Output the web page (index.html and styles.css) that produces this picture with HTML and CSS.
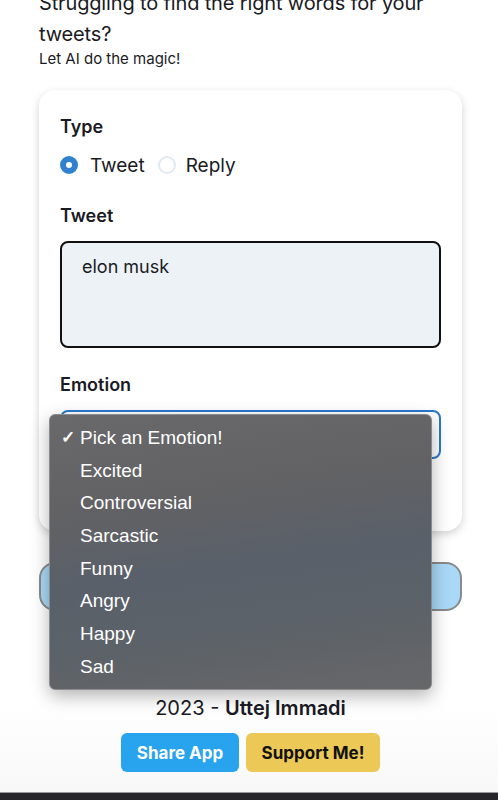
FILE: index.html
```html
<!DOCTYPE html>
<html lang="en">
<head>
    <meta charset="UTF-8">
    <meta name="viewport" content="width=device-width, initial-scale=1.0">
    <title>Tweet Generator</title>
    <link rel="stylesheet" href="styles.css">
</head>
<body>
    <div class="main">
        <h1 class="title">Struggling to find the right words for your tweets?</h1>
        <p class="sub">Let AI do the magic!</p>

        <div class="card">
            <div class="label">Type</div>
            <div class="radios">
                <span class="radio checked"></span>
                <span class="radio-text">Tweet</span>
                <span class="radio"></span>
                <span class="radio-text">Reply</span>
            </div>

            <div class="label">Tweet</div>
            <div class="textarea">elon musk</div>

            <div class="label">Emotion</div>
            <div class="select">
                <!-- native popup, open -->
                <div class="dropdown">
                    <div class="option"><span class="check">✓</span>Pick an Emotion!</div>
                    <div class="option">Excited</div>
                    <div class="option">Controversial</div>
                    <div class="option">Sarcastic</div>
                    <div class="option">Funny</div>
                    <div class="option">Angry</div>
                    <div class="option">Happy</div>
                    <div class="option">Sad</div>
                </div>
            </div>
        </div>

        <button class="generate">Generate</button>

        <div class="footer">
            <div class="credit">2023 - <b>Uttej Immadi</b></div>
            <div class="links">
                <button class="btn share">Share App</button>
                <button class="btn support">Support Me!</button>
            </div>
        </div>
    </div>
    <div class="bottom-bar"></div>
</body>
</html>
```

FILE: styles.css
```css
*{
    box-sizing: border-box;
}
body{
    margin: 0;
    height: 800px;
    overflow: hidden;
    background: linear-gradient(#fff 700px, #f8f8f8 792px);
    font-family: Inter, "Noto Sans", sans-serif;
    color: #1a1a24;
}
.main{
    width: 423px;
    margin-left: 39px;
}
.title{
    font-size: 20px;
    font-weight: 400;
    line-height: 31px;
    letter-spacing: -0.15px;
    margin: -12px 0 0;
    width: 400px;
}
.sub{
    font-size: 15px;
    margin: -1px 0 0;
}
.card{
    margin-top: 22px;
    height: 441px;
    border-radius: 16px;
    background: #fff;
    box-shadow: 0 3px 9px rgba(0,0,0,0.18);
    padding: 25px 21px;
}
.label{
    font-size: 18px;
    font-weight: 600;
    line-height: 24px;
}
.radios{
    display: flex;
    align-items: center;
    height: 34px;
    margin: 9px 0 22px;
    font-size: 19px;
}
.radio{
    width: 18px;
    height: 18px;
    border-radius: 50%;
    border: 2px solid #e2e8f0;
}
.radio.checked{
    border: 6px solid #3182ce;
    background: #fff;
}
.radio-text{
    margin: 0 13px 0 12px;
}
.radio-text:last-child{
    margin-left: 10px;
}
.textarea{
    margin: 13px 0 25px;
    height: 107px;
    border: 2px solid #111;
    border-radius: 8px;
    background: #edf2f7;
    padding: 13px 20px;
    font-size: 18px;
}
.select{
    position: relative;
    margin-top: 13px;
    height: 49px;
    border: 2px solid #2a78c9;
    border-radius: 8px;
}
.dropdown{
    position: absolute;
    top: 2px;
    left: -13px;
    width: 383px;
    height: 276px;
    padding-top: 6px;
    border-radius: 6px;
    border: 1px solid #8c8c8e;
    background: linear-gradient(172deg, #69686a 0%, #626264 30%, #59606a 55%, #5c6268 75%, #676769 100%);
    box-shadow: 0 6px 18px rgba(0,0,0,0.3);
    font-family: "Liberation Sans", Arial, sans-serif;
    font-size: 19px;
    color: #fff;
    z-index: 2;
}
.option{
    height: 32.7px;
    line-height: 33px;
    padding-left: 30px;
    position: relative;
}
.check{
    position: absolute;
    left: 11px;
    font-size: 17px;
    font-weight: 700;
}
.generate{
    display: block;
    width: 423px;
    height: 49px;
    margin-top: 31px;
    border: 2px solid #8a8a8a;
    border-radius: 16px;
    background: #a9d9f7;
    font-family: inherit;
    font-size: 18px;
}
.footer{
    margin-top: 85px;
    text-align: center;
}
.credit{
    font-size: 20px;
    line-height: 24px;
}
.credit b{
    font-weight: 600;
}
.links{
    display: flex;
    justify-content: center;
    gap: 7px;
    margin-top: 13px;
}
.btn{
    height: 39px;
    border: none;
    border-radius: 6px;
    font-family: inherit;
    font-size: 17px;
    font-weight: 700;
}
.share{
    width: 118px;
    background: #28a3ee;
    color: #fff;
}
.support{
    width: 134px;
    background: #ecc856;
    color: #111;
}
.bottom-bar{
    position: absolute;
    left: 0;
    top: 792px;
    width: 100%;
    height: 8px;
    background: #27272b;
    border-top: 1px solid #9a9a9a;
}
```
